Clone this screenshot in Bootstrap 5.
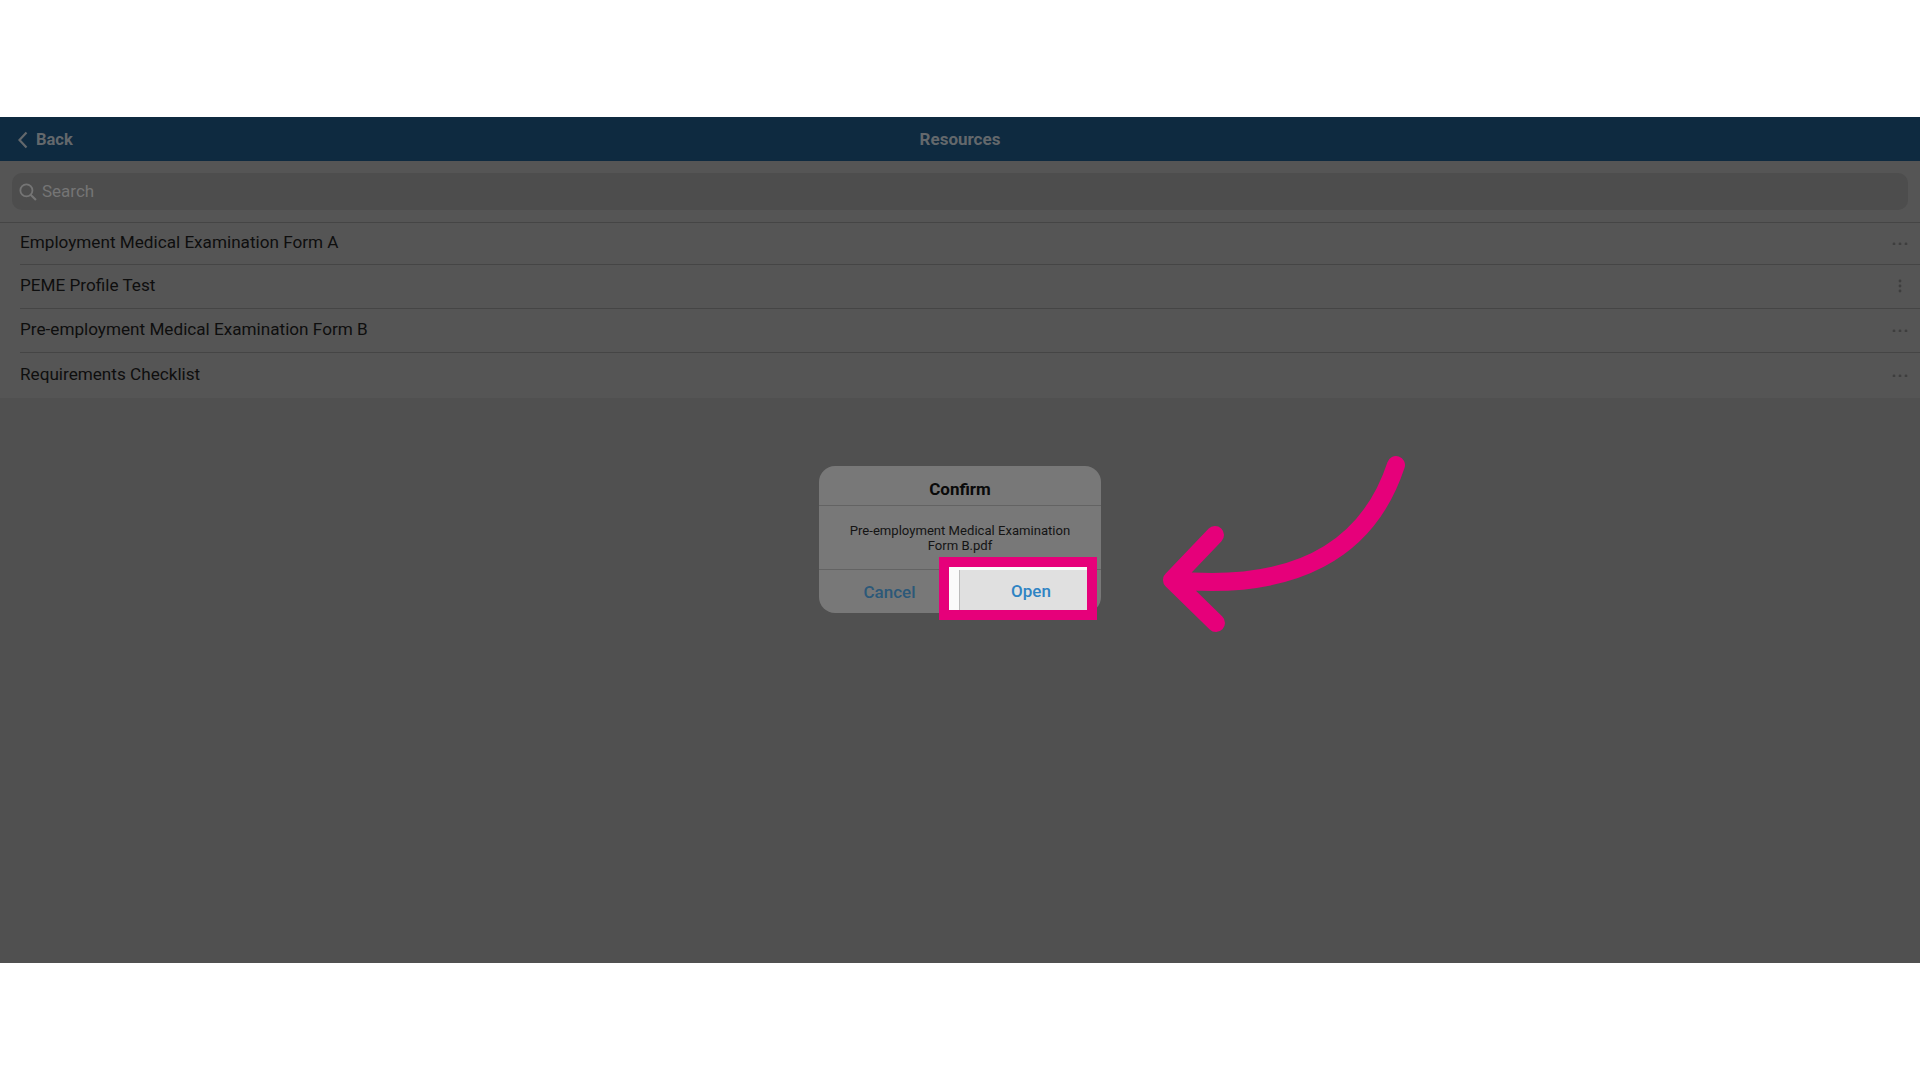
<!DOCTYPE html>
<html>
  <head>
    <title>Resources</title>
    <link href="https://cdn.jsdelivr.net/npm/bootstrap@5.3.3/dist/css/bootstrap.min.css" rel="stylesheet" />
    <style>
      body { background: #fff; font-family: Roboto, "Liberation Sans", sans-serif; }
      .app { margin-top: 117px; height: 845.5px; background: #505050; position: relative; overflow: hidden; }
      .top-bar { height: 44px; background: #0e2a40; color: #63686c; font-size: 17px; font-weight: 700; position: relative; padding-top: 2px; }
      .back { left: 18px; top: 0; bottom: 0; padding-top: 2px; font-size: 16.5px; }
      .content { background: #555555; height: 237px; }
      .search-wrap { height: 61px; padding: 12px 12px; }
      .search-box { height: 37px; background: #4d4d4d; border-radius: 10px; color: #757575; font-size: 17px; padding-left: 7px; gap: 5px; }
      .res-list { border-top: 1px solid #454545; }
      .res-list .list-group-item { background: transparent; color: #0e0e0e; font-size: 17.15px; height: 44.2px; margin-left: 20px; padding: 0 12px 1px 0; border-width: 0 0 1px; border-bottom: 1px solid #454545; }
      .res-list .list-group-item:first-child { height: 42px; padding-bottom: 2px; }
      .res-list .list-group-item svg { fill: #3e3e3e; }
      .confirm { position: absolute; left: 819px; top: 349px; width: 282px; height: 147px; background: #787878; border: 0; border-radius: 16px; color: #0a0a0a; }
      .confirm .card-header { background: transparent; height: 40px; font-size: 17px; font-weight: 700; border-bottom: 1px solid #636363; padding: 8px 0 0; border-radius: 16px 16px 0 0; }
      .confirm .card-body { height: 63px; font-size: 13.1px; line-height: 15px; color: #141414; padding: 17px 10px 0; }
      .confirm .card-footer { background: transparent; border-top: 1px solid #636363; padding: 3px 0 0; height: 44px; font-size: 17px; font-weight: 500; }
      .btn-cancel { color: #2c5878; width: 50%; }
      .mark { position: absolute; left: 939px; top: 440px; width: 158px; height: 63px; border: 10px solid #e6007a; background: #fafafa; padding: 3px 0 0 10px; }
      .mark .open { background: #e0e0e0; border-left: 1px solid #bbb; height: 100%; color: #2f84c4; font-size: 17px; font-weight: 500; padding: 3px 0 0 15px; }
      .arrow { position: absolute; left: 1140px; top: 323px; }
    </style>
  </head>
  <body>
    <div class="app">
      <div class="top-bar d-flex align-items-center justify-content-center">
        <div class="back position-absolute d-flex align-items-center gap-2">
          <svg width="10" height="18" viewBox="0 0 10 18"><path d="M8.5 1.5 1.5 9l7 7.5" fill="none" stroke="#63686c" stroke-width="2.2"/></svg>
          <span>Back</span>
        </div>
        <span>Resources</span>
      </div>
      <div class="content">
        <div class="search-wrap">
          <div class="search-box d-flex align-items-center">
            <svg width="18" height="18" viewBox="0 0 17 17"><circle cx="7" cy="7" r="5.7" fill="none" stroke="#757575" stroke-width="1.7"/><path d="m11 11 5 5" stroke="#757575" stroke-width="2"/></svg>
            <span>Search</span>
          </div>
        </div>
        <ul class="list-group list-group-flush res-list rounded-0">
          <li class="list-group-item d-flex align-items-center justify-content-between">
            <span>Employment Medical Examination Form A</span>
            <svg width="16" height="4" viewBox="0 0 16 4"><circle cx="2" cy="3" r="1.4"/><circle cx="8" cy="3" r="1.4"/><circle cx="14" cy="3" r="1.4"/></svg>
          </li>
          <li class="list-group-item d-flex align-items-center justify-content-between">
            <span>PEME Profile Test</span>
            <svg class="me-1" width="8" height="14" viewBox="0 0 8 14"><circle cx="4" cy="2" r="1.4"/><circle cx="4" cy="7" r="1.4"/><circle cx="4" cy="12" r="1.4"/></svg>
          </li>
          <li class="list-group-item d-flex align-items-center justify-content-between">
            <span>Pre-employment Medical Examination Form B</span>
            <svg width="16" height="4" viewBox="0 0 16 4"><circle cx="2" cy="3" r="1.4"/><circle cx="8" cy="3" r="1.4"/><circle cx="14" cy="3" r="1.4"/></svg>
          </li>
          <li class="list-group-item d-flex align-items-center justify-content-between">
            <span>Requirements Checklist</span>
            <svg width="16" height="4" viewBox="0 0 16 4"><circle cx="2" cy="3" r="1.4"/><circle cx="8" cy="3" r="1.4"/><circle cx="14" cy="3" r="1.4"/></svg>
          </li>
        </ul>
      </div>

      <div class="card confirm">
        <div class="card-header d-flex align-items-center justify-content-center">Confirm</div>
        <div class="card-body text-center">Pre-employment Medical Examination<br />Form B.pdf</div>
        <div class="card-footer d-flex align-items-center">
          <span class="btn-cancel text-center">Cancel</span>
        </div>
      </div>

      <div class="mark">
        <div class="open d-flex align-items-center justify-content-center">Open</div>
      </div>

      <svg class="arrow" width="280" height="200" viewBox="1140 440 280 200">
        <path d="M1396 465C1368 550 1295 592 1172 580M1215 535 1172 580 1216 623" fill="none" stroke="#e6007a" stroke-width="18" stroke-linecap="round" stroke-linejoin="round"/>
      </svg>
    </div>
    <script src="https://cdn.jsdelivr.net/npm/bootstrap@5.3.3/dist/js/bootstrap.bundle.min.js"></script>
  </body>
</html>
